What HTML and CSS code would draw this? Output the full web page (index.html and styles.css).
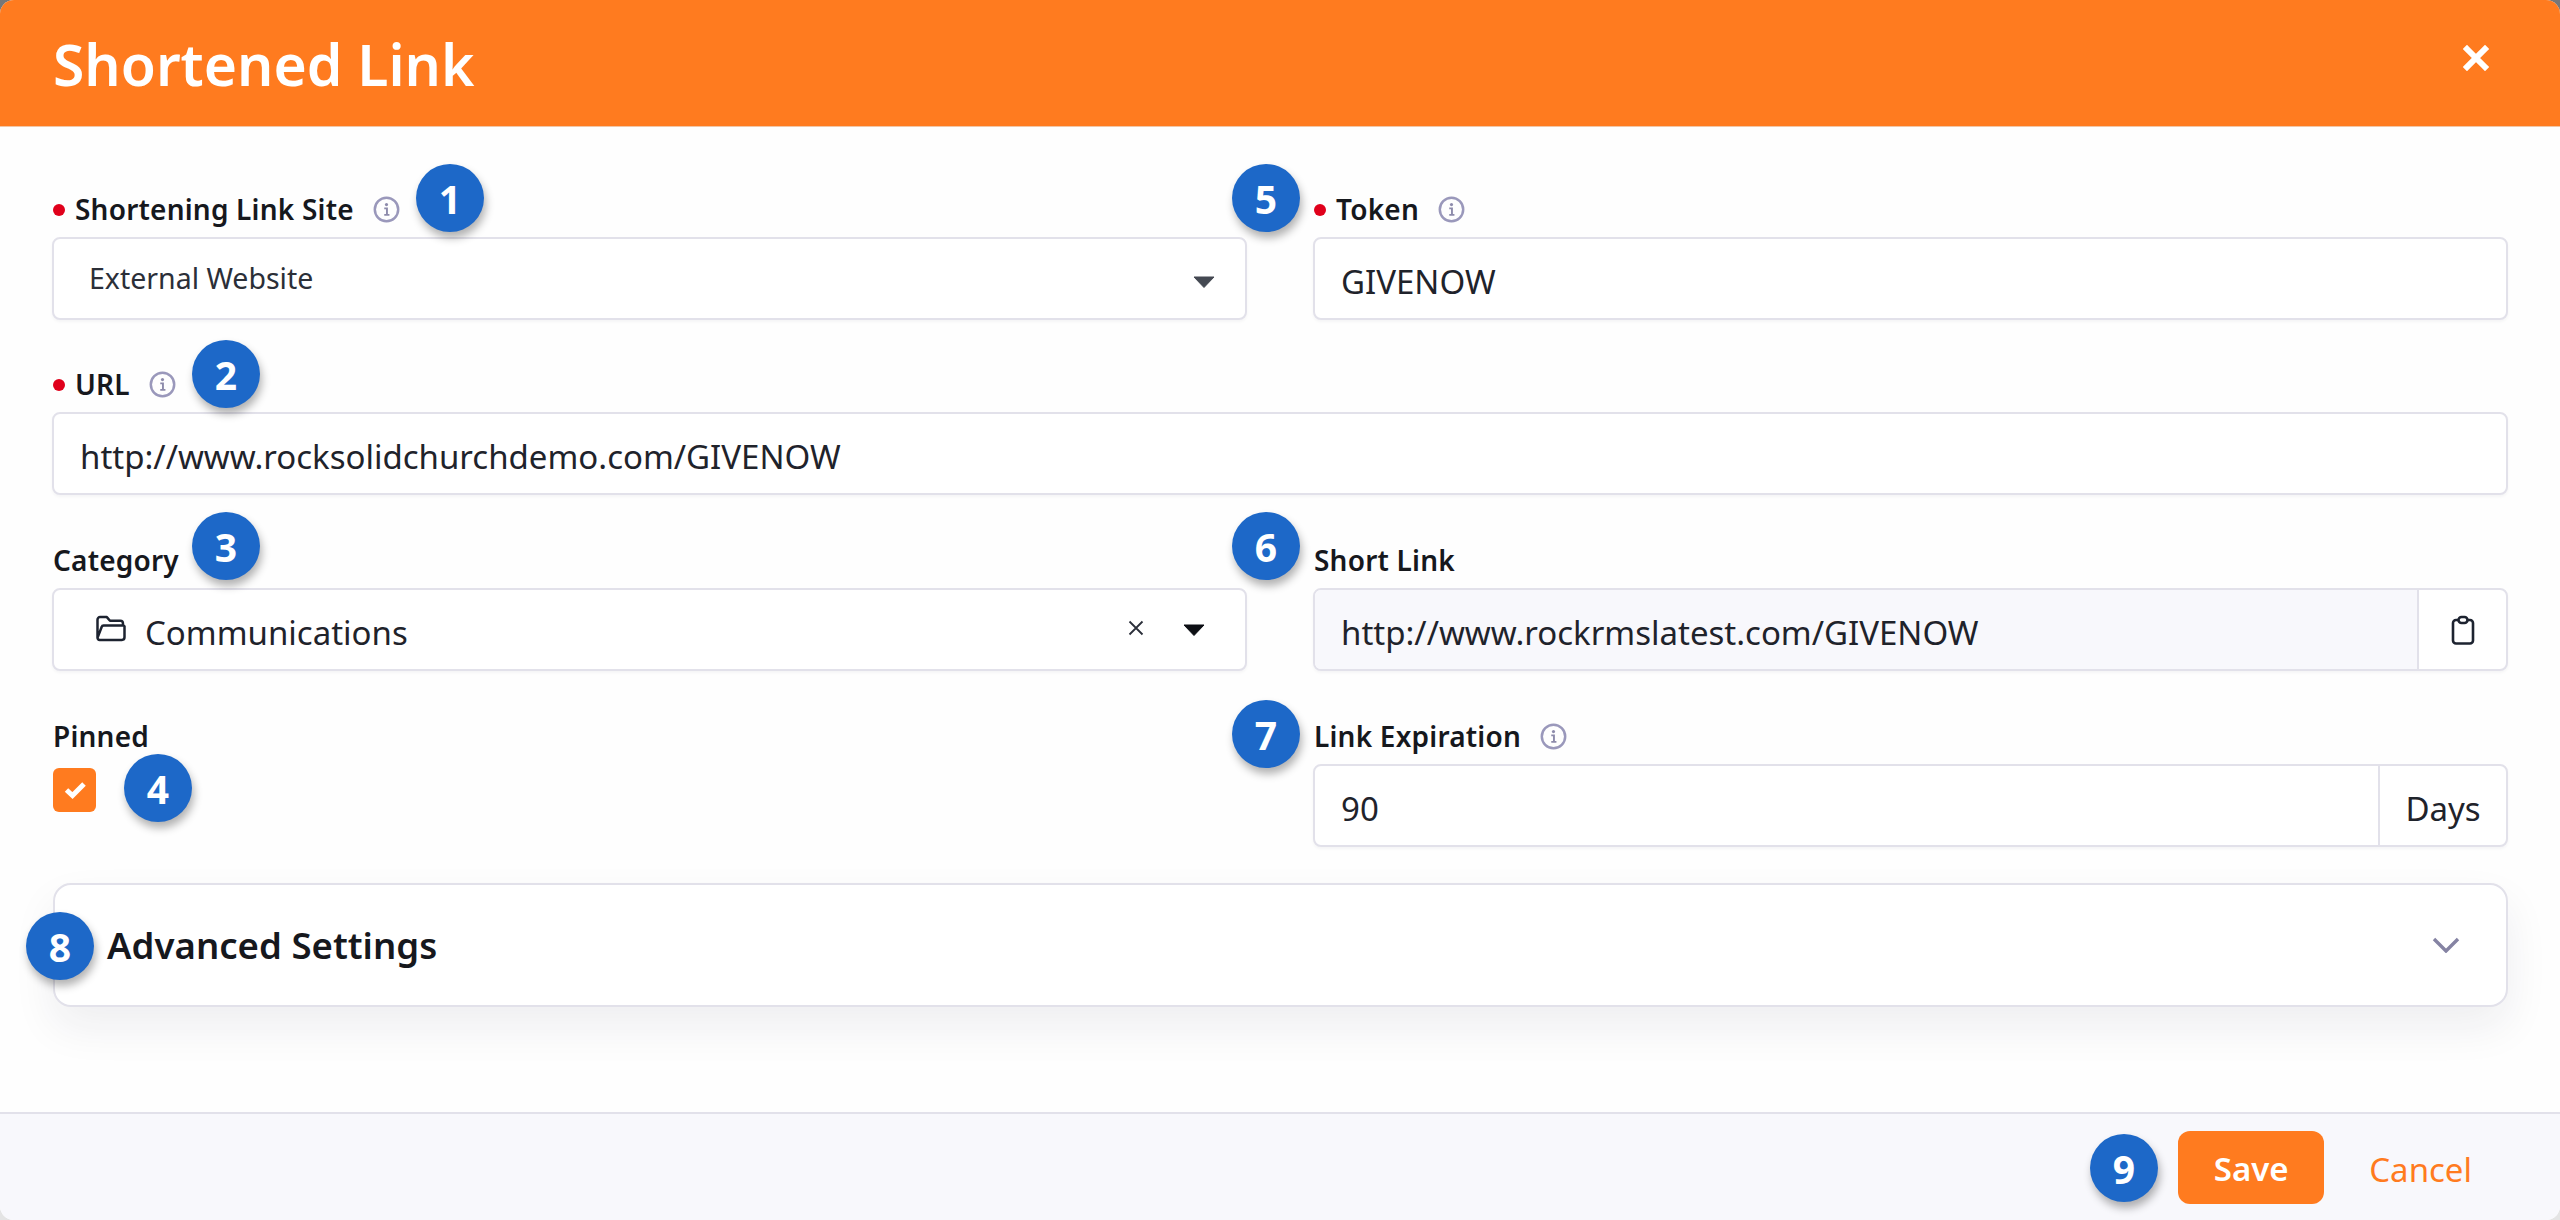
FILE: index.html
```html
<!DOCTYPE html>
<html lang="en">
<head>
<meta charset="utf-8">
<title>Shortened Link</title>
<link rel="stylesheet" href="styles.css">
</head>
<body>
<svg class="defs" width="0" height="0" aria-hidden="true">
  <symbol id="info" viewBox="0 0 24 24"><circle cx="12" cy="12" r="10.4" fill="none" stroke="#9a98bb" stroke-width="2.200"/><circle cx="12" cy="7.600" r="1.400" fill="#8d8bab"/><path d="M10 11h2.400v5.600M10 16.800h4.600" fill="none" stroke="#8d8bab" stroke-width="1.700"/></symbol>
  <symbol id="caret" viewBox="0 0 22 12"><path d="M1 1h20L11 11.500z" fill="currentColor" stroke="currentColor" stroke-width="1" stroke-linejoin="round"/></symbol>
</svg>
<main class="modal">
  <header class="modal-head">
    <h1>Shortened Link</h1>
    <svg class="close" viewBox="0 0 26 26"><path d="M4 4l18 18M22 4L4 22" stroke="#fff" stroke-width="6" stroke-linecap="square" fill="none"/></svg>
  </header>
  <section class="modal-body">
    <div class="row two first">
      <div class="field">
        <label class="req">Shortening Link Site<svg class="info"><use href="#info"/></svg></label>
        <div class="control select"><span class="sel-text">External Website</span><svg class="caret dim"><use href="#caret"/></svg></div>
      </div>
      <div class="field">
        <label class="req">Token<svg class="info"><use href="#info"/></svg></label>
        <div class="control"><span class="val">GIVENOW</span></div>
      </div>
    </div>
    <div class="row">
      <div class="field">
        <label class="req">URL<svg class="info"><use href="#info"/></svg></label>
        <div class="control"><span class="val">http://www.rocksolidchurchdemo.com/GIVENOW</span></div>
      </div>
    </div>
    <div class="row two">
      <div class="field">
        <label>Category</label>
        <div class="control picker">
          <svg class="folder" viewBox="0 0 30 26"><path d="M2 22V4.500A2.500 2.500 0 0 1 4.500 2h6.500l3 3.500h10A2.500 2.500 0 0 1 26.500 8v2M2 22l4-10.500A2 2 0 0 1 8 10h18.500a1.500 1.500 0 0 1 1.500 2V21.500a2.500 2.500 0 0 1-2.500 2.500H4a2 2 0 0 1-2-2z" fill="none" stroke="#1d2330" stroke-width="2.400" stroke-linejoin="round"/></svg>
          <span class="val grow">Communications</span>
          <svg class="clear" viewBox="0 0 16 16"><path d="M1.500 1.500l13 13M14.500 1.500l-13 13" stroke="#2b2f3a" stroke-width="1.800" fill="none"/></svg>
          <svg class="caret"><use href="#caret"/></svg>
        </div>
      </div>
      <div class="field">
        <label>Short Link</label>
        <div class="group">
          <span class="val group-main shaded">http://www.rockrmslatest.com/GIVENOW</span>
          <span class="addon clip"><svg viewBox="0 0 24 30" class="clip-icon"><path d="M7.500 5H5a3 3 0 0 0-3 3v17.500a3 3 0 0 0 3 3h14a3 3 0 0 0 3-3V8a3 3 0 0 0-3-3h-2.500" fill="none" stroke="#1d2330" stroke-width="2.600"/><rect x="7.500" y="2" width="9" height="6" rx="3" fill="none" stroke="#1d2330" stroke-width="2.600"/></svg></span>
        </div>
      </div>
    </div>
    <div class="row two">
      <div class="field">
        <label>Pinned</label>
        <span class="check"><svg viewBox="0 0 22 18"><path d="M2.500 9l6 5.500L20 3" fill="none" stroke="#fff" stroke-width="5"/></svg></span>
      </div>
      <div class="field">
        <label>Link Expiration<svg class="info"><use href="#info"/></svg></label>
        <div class="group">
          <span class="val group-main">90</span>
          <span class="addon days">Days</span>
        </div>
      </div>
    </div>
    <div class="panel">
      <h2>Advanced Settings</h2>
      <svg class="chev" viewBox="0 0 28 16"><path d="M2 2l12 12L26 2" fill="none" stroke="#8583a3" stroke-width="3.400"/></svg>
    </div>
  </section>
  <footer class="modal-foot">
    <button class="save">Save</button>
    <button class="cancel">Cancel</button>
  </footer>
  <span class="badge b1">1</span>
  <span class="badge b2">2</span>
  <span class="badge b3">3</span>
  <span class="badge b4">4</span>
  <span class="badge b5">5</span>
  <span class="badge b6">6</span>
  <span class="badge b7">7</span>
  <span class="badge b8">8</span>
  <span class="badge b9">9</span>
</main>
</body>
</html>
```
FILE: styles.css
```css
* { box-sizing: border-box; }
html, body { margin: 0; height: 100%; }
body { background: linear-gradient(#777 0 50%, #e4e4e4 50% 100%); font-family: "Noto Sans", "Open Sans", sans-serif; color: #16181d; overflow: hidden; }
.defs { position: absolute; }
.modal { position: relative; width: 2560px; height: 1220px; background: #fff; border-radius: 14px; overflow: hidden; display: flex; flex-direction: column; }
.modal-head { height: 127px; flex: none; background: #ff7b1f; border-bottom: 1px solid #f2c6a5; display: flex; align-items: center; justify-content: space-between; padding: 2px 71px 0 53px; }
.modal-head h1 { margin: 0; color: #fff; font-size: 57px; font-weight: 600; line-height: 1; }
.close { width: 26px; height: 26px; margin-top: -12px; }
.modal-body { flex: 1; padding: 69px 52px 0 52px; background: #fefefe; display: flex; flex-direction: column; gap: 52px; }
.row { display: flex; gap: 66px; height: 124px; flex: none; }
.row.first { margin-bottom: -1px; }
.field { flex: 1 1 0; min-width: 0; }
.field label { display: flex; align-items: center; height: 24px; padding: 3px 0 0 1px; font-size: 28px; font-weight: 600; line-height: 21px; margin-bottom: 17px; letter-spacing: 0.2px; white-space: nowrap; }
.field label.req::before { content: ""; width: 12px; height: 12px; border-radius: 50%; background: #e0001b; margin-right: 10px; }
.info { width: 27px; height: 27px; margin-left: 19px; }
.control, .group { height: 83px; border: 2px solid #e2e1ea; border-radius: 8px; background: #fff; display: flex; align-items: center; box-shadow: 0 2px 3px rgba(30,30,60,.04); }
.control { padding: 0 26px; }
.val { font-size: 33px; color: #1f232b; white-space: nowrap; padding-top: 5px; }
.sel-text { font-size: 28.5px; color: #2b2f38; flex: 1; padding-left: 9px; margin-top: -2px; }
.select { padding-right: 30px; }
.caret { width: 22px; height: 12px; color: #0d0f14; flex: none; }
.caret.dim { color: #444952; margin-top: 6px; }
.folder { width: 32px; height: 27px; margin-left: 15px; margin-right: 18px; flex: none; margin-top: -3px; }
.grow { flex: 1; }
.picker { padding-right: 40px; }
.clear { width: 16px; height: 16px; margin-right: 39px; margin-top: -3px; }
.group-main { flex: 1; align-self: stretch; display: flex; align-items: center; padding-left: 26px; border-radius: 6px 0 0 6px; }
.shaded { background: #f8f8fc; }
.addon { height: 100%; border-left: 2px solid #e2e1ea; display: flex; align-items: center; justify-content: center; flex: none; }
.clip { width: 89px; }
.clip-icon { width: 24px; height: 30px; }
.days { width: 128px; font-size: 33px; color: #1f232b; padding-top: 5px; }
.check { display: flex; align-items: center; justify-content: center; width: 43px; height: 44px; margin-top: -37px; margin-left: 1px; position: relative; top: 41px; background: #ff7b1f; border-radius: 6px; }
.check svg { width: 22px; height: 18px; }
.panel { height: 124px; flex: none; margin-top: -16px; margin-left: 1px; border: 2px solid #e2e1ea; border-radius: 18px; background: #fff; display: flex; align-items: center; justify-content: space-between; padding: 0 46px 0 52px; box-shadow: 0 20px 44px rgba(30,30,60,.07); }
.panel h2 { margin: 0; font-size: 36.6px; font-weight: 600; }
.chev { width: 28px; height: 16px; }
.modal-foot { height: 108px; flex: none; background: #f8f8fc; border-top: 2px solid #e2e1ea; display: flex; align-items: center; justify-content: flex-end; padding: 0 88px 0 0; gap: 45px; }
.save { width: 146px; height: 73px; border: 0; border-radius: 12px; padding-top: 3px; background: #ff7b1f; color: #fff; font: 600 33px "Noto Sans", sans-serif; }
.cancel { border: 0; background: none; padding: 5px 0 0; color: #ff7b1f; font: 400 33px "Noto Sans", sans-serif; }
.badge { position: absolute; width: 68px; height: 68px; border-radius: 50%; background: #1d68c8; color: #fff; font-size: 39px; font-weight: 700; display: flex; align-items: center; justify-content: center; box-shadow: 2px 6px 8px rgba(0,0,0,.3); }
.b1 { left: 416px; top: 164px; }
.b2 { left: 192px; top: 340px; }
.b3 { left: 192px; top: 512px; }
.b4 { left: 124px; top: 754px; }
.b5 { left: 1232px; top: 164px; }
.b6 { left: 1232px; top: 512px; }
.b7 { left: 1232px; top: 700px; }
.b8 { left: 26px; top: 912px; }
.b9 { left: 2090px; top: 1134px; }
```
